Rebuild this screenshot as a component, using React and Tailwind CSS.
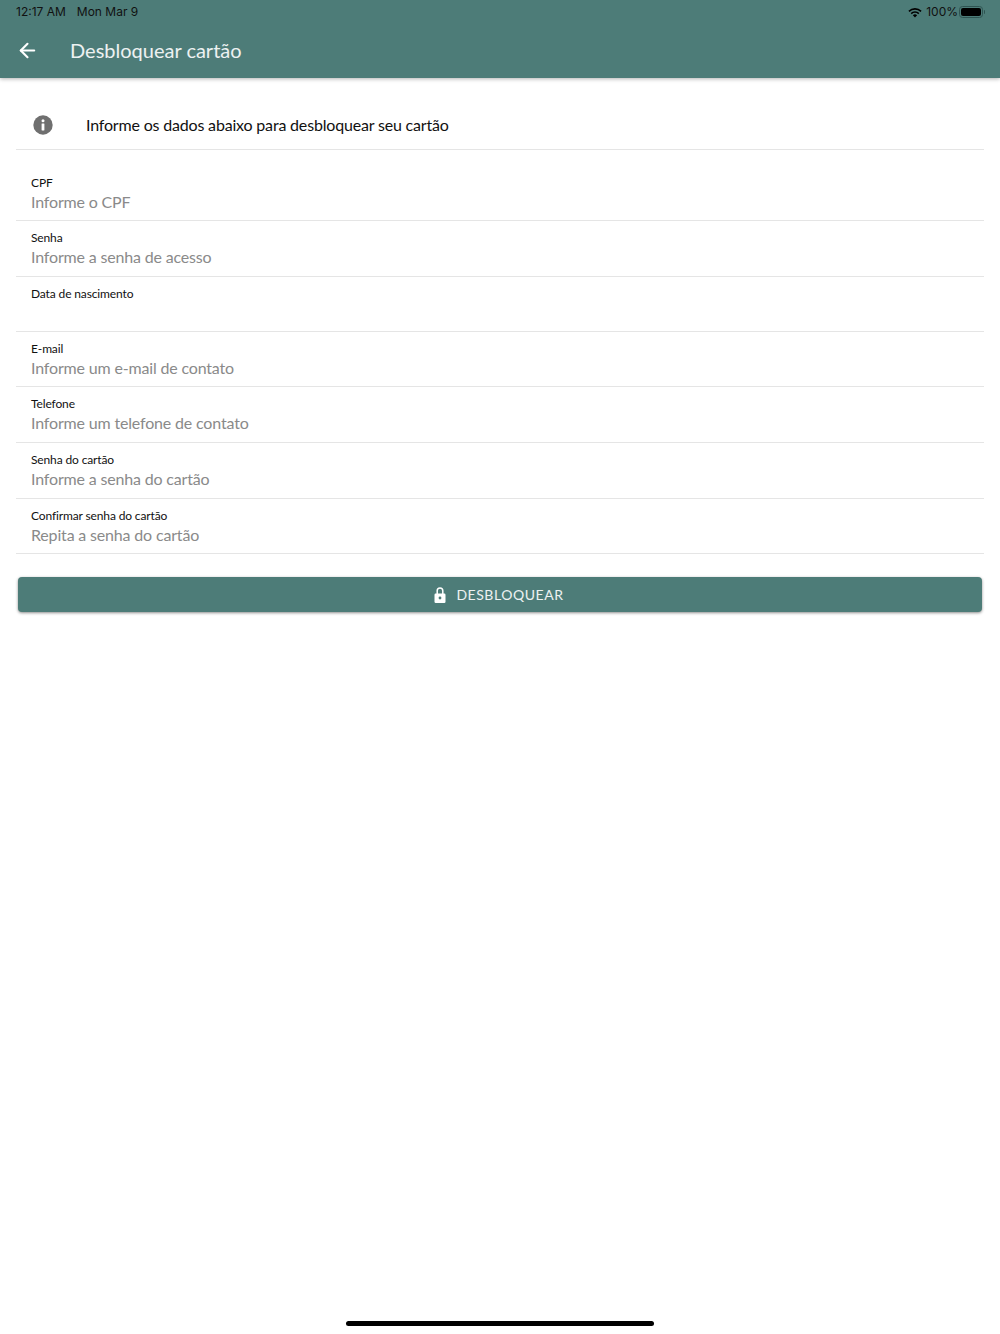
import React from "react";
import { ArrowLeft } from "lucide-react";

const fields = [
  ["CPF", "Informe o CPF", "h-[71px]", "pt-[25px]"],
  ["Senha", "Informe a senha de acesso", "h-[56px]", "pt-[9px]"],
  ["Data de nascimento", "", "h-[55px]", "pt-[9px]"],
  ["E-mail", "Informe um e-mail de contato", "h-[55px]", "pt-[9px]"],
  ["Telefone", "Informe um telefone de contato", "h-[56px]", "pt-[9px]"],
  ["Senha do cartão", "Informe a senha do cartão", "h-[55.5px]", "pt-[9px]"],
  ["Confirmar senha do cartão", "Repita a senha do cartão", "h-[55.5px]", "pt-[9px]"],
];

function Wifi() {
  return (
    <svg width="14" height="11" viewBox="0 0 15 11" className="mr-[4px]">
      <path d="M0.4 3.6 A10.2 10.2 0 0 1 14.6 3.6 L13.4 4.9 A8.4 8.4 0 0 0 1.6 4.9 Z" fill="#000" />
      <path d="M2.8 6 A6.8 6.8 0 0 1 12.2 6 L11 7.3 A5 5 0 0 0 4 7.3 Z" fill="#000" />
      <path d="M5.2 8.4 A3.4 3.4 0 0 1 9.8 8.4 L7.5 10.8 Z" fill="#000" />
    </svg>
  );
}

export default function App() {
  return (
    <div className="relative h-[1334px] w-full bg-white font-['Lato',sans-serif]">
      <header className="relative z-10 h-[78px] bg-[#4d7c78] shadow-[0_1px_4px_rgba(0,0,0,0.3)]">
        <div className="flex h-[24px] items-center justify-between pl-[16px] pr-[15px] font-['Inter',sans-serif] text-[12px] text-[#111]">
          <div className="flex gap-[11px]">
            <span>12:17 AM</span>
            <span>Mon Mar 9</span>
          </div>
          <div className="flex items-center">
            <Wifi />
            <span className="mr-[1px]">100%</span>
            <div className="flex items-center">
              <div className="h-[12px] w-[24px] rounded-[3.5px] border border-[#2f5452] p-[1px]">
                <div className="h-full w-full rounded-[2px] bg-black" />
              </div>
              <div className="ml-[1px] h-[4px] w-[1px] rounded-r-sm bg-[#2f5452]" />
            </div>
          </div>
        </div>
        <div className="flex h-[54px] items-center pl-[16px]">
          <ArrowLeft size={23} strokeWidth={2.2} className="mb-[1px] text-white" />
          <span className="mb-[2px] ml-[31px] text-[20px] text-white/90">Desbloquear cartão</span>
        </div>
      </header>

      <main className="px-[16px]">
        <div className="flex h-[72px] items-center border-b border-[#e5e5e5] pt-[22px]">
          <svg width="20" height="20" viewBox="0 0 20 20" className="ml-[17px]">
            <circle cx="10" cy="10" r="9.7" fill="#6f6f6f" />
            <circle cx="10" cy="5.8" r="1.5" fill="#fff" />
            <rect x="8.6" y="8.4" width="2.8" height="7" rx="0.4" fill="#fff" />
          </svg>
          <span className="ml-[33px] text-[16px] tracking-[-0.18px] text-[#111]">
            Informe os dados abaixo para desbloquear seu cartão
          </span>
        </div>

        {fields.map(([label, placeholder, h, pt]) => (
          <div key={label} className={`${h} ${pt} border-b border-[#e5e5e5] pl-[15px]`}>
            <div className="text-[12px] leading-[15px] tracking-[-0.13px] text-[#111]">{label}</div>
            <div className="mt-[2px] h-[20px] text-[16px] leading-[20px] tracking-[-0.17px] text-[#8a8a8a]">{placeholder}</div>
          </div>
        ))}

        <div className="mx-[2px] mt-[23px] flex h-[35px] items-center justify-center rounded-[4px] bg-[#4d7c78] pr-[2px] shadow-[0_1px_3px_rgba(0,0,0,0.45)]">
          <svg width="12" height="16" viewBox="0 0 12 16" className="mr-[10px]">
            <path d="M3.2 7 V3.8 A2.8 2.8 0 0 1 8.8 3.8 V7" fill="none" stroke="#fff" strokeWidth="1.5" />
            <rect x="0.5" y="6.5" width="11" height="9.5" rx="1.2" fill="#fff" />
            <circle cx="6" cy="11" r="1.4" fill="#4d7c78" />
          </svg>
          <span className="text-[14px] tracking-[0.55px] text-white/90">DESBLOQUEAR</span>
        </div>
      </main>

      <div className="absolute bottom-[8px] left-[346px] h-[5px] w-[308px] rounded-full bg-black" />
    </div>
  );
}
